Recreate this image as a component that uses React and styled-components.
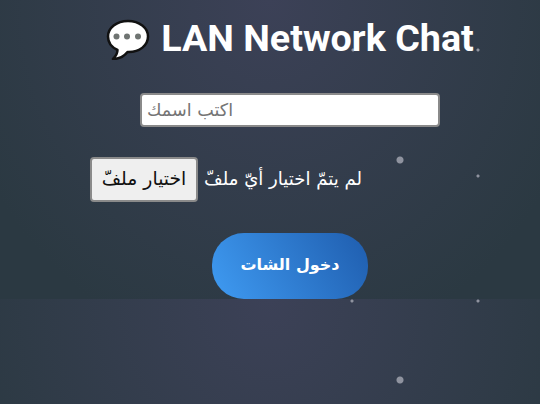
import React from 'react';
import styled, { createGlobalStyle } from 'styled-components';

const arabic = `"DejaVu Sans", "Noto Sans", sans-serif`;

const GlobalStyle = createGlobalStyle`
  html, body {
    margin: 0;
    padding: 0;
    background: #2c343a;
  }
`;

const dots = [
  [478, 50, 1.5], [353, 50, 1.5], [478, 176, 1.5], [352, 301, 1.5], [478, 301, 1.5],
  [400, 160, 3.5], [400, 380, 3.5],
];
const dotLayers = dots
  .map(([x, y, r]) => `radial-gradient(circle at ${x}px ${y}px, #8f939f ${r - 0.5}px, transparent ${r + 0.5}px)`)
  .join(', ');

const Page = styled.div`
  height: 404px;
  width: 540px;
  overflow: hidden;
  background-image: ${dotLayers}, radial-gradient(ellipse at top, #3c4157 0%, #2b3942 85%);
  background-size: 100% 100%, 100% 100%, 100% 100%, 100% 100%, 100% 100%, 100% 100%, 100% 100%, 100% 299px;
  background-repeat: no-repeat, no-repeat, no-repeat, no-repeat, no-repeat, no-repeat, no-repeat, repeat-y;
`;

const Form = styled.div`
  width: 400px;
  margin-left: 90px;
  display: flex;
  flex-direction: column;
  align-items: center;
`;

const Title = styled.h1`
  margin: 14px 0 0;
  height: 48px;
  display: flex;
  align-items: center;
  gap: 11px;
  color: #fff;
  font-family: Roboto, sans-serif;
  font-weight: 700;
  font-size: 37.7px;
  white-space: nowrap;
`;

const NameInput = styled.input`
  box-sizing: border-box;
  width: 300px;
  height: 34px;
  margin-top: 31px;
  padding: 0 5px;
  background: #fff;
  border: 2px solid #8a8a8a;
  border-radius: 4px;
  color: #222;
  font-family: ${arabic};
  font-size: 17.6px;
  outline: none;
  &::placeholder {
    color: #757575;
  }
`;

const FileRow = styled.div`
  align-self: flex-start;
  margin-top: 30px;
  display: flex;
  align-items: center;
  gap: 6px;
  color: #fff;
  font-family: ${arabic};
  font-size: 18.1px;
`;

const FileButton = styled.button`
  box-sizing: border-box;
  width: 108px;
  height: 45px;
  padding: 0 0 2px;
  background: #efefef;
  border: 2px solid #8a8a8a;
  border-radius: 4px;
  color: #111;
  font-family: ${arabic};
  font-size: 18.8px;
`;

const FileLabel = styled.span`
  padding-bottom: 2px;
`;

const EnterButton = styled.button`
  box-sizing: border-box;
  width: 156px;
  height: 66px;
  margin-top: 31px;
  padding: 0 0 4px;
  background: linear-gradient(60deg, #3f9bf2 0%, #1f5dae 100%);
  border: none;
  border-radius: 32px;
  color: #fff;
  font-family: ${arabic};
  font-weight: 700;
  font-size: 16px;
`;

const ChatIcon = () => (
  <svg width="44" height="44" viewBox="0 0 44 44">
    <path
      d="M22 5C10.500 5 2 12 2 20.500C2 26.500 6 31.500 11.500 34C11.500 37 10 40 7 43C13 43 18 40.500 21.500 36C34 36.500 42 29 42 20.500C42 12 33.500 5 22 5Z"
      fill="#fff"
      stroke="#111"
      strokeWidth="2.500"
      strokeLinejoin="round"
    />
    <circle cx="10.500" cy="20.500" r="3" fill="#6f7472" />
    <circle cx="21" cy="20.500" r="3" fill="#6f7472" />
    <circle cx="32" cy="20.500" r="3" fill="#6f7472" />
  </svg>
);

const App = () => {
  return (
    <React.Fragment>
      <GlobalStyle />
      <Page>
        <Form>
          <Title>
            <ChatIcon />
            LAN Network Chat
          </Title>
          <NameInput placeholder="اكتب اسمك" />
          <FileRow>
            <FileButton>اختيار ملفّ</FileButton>
            <FileLabel>لم يتمّ اختيار أيّ ملفّ</FileLabel>
          </FileRow>
          <EnterButton>دخول الشات</EnterButton>
        </Form>
      </Page>
    </React.Fragment>
  );
};

export default App;
